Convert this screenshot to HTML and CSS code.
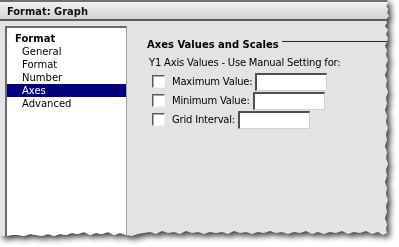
FILE: index.html
```html
<!DOCTYPE html>
<html>
<head>
<meta charset="utf-8">
<link rel="stylesheet" href="styles.css">
</head>
<body>
<div class="shot">
  <div class="window">
    <div class="titlebar">Format: Graph</div>
    <div class="content">
      <div class="list">
        <div class="list-head">Format</div>
        <div class="list-item">General</div>
        <div class="list-item">Format</div>
        <div class="list-item">Number</div>
        <div class="list-item selected">Axes</div>
        <div class="list-item">Advanced</div>
      </div>
      <div class="panel">
        <div class="group-head">
          <span class="group-title">Axes Values and Scales</span>
          <span class="group-line"></span>
        </div>
        <div class="subtitle">Y1 Axis Values - Use Manual Setting for:</div>
        <div class="row"><span class="check"></span><span class="label">Maximum Value:</span><span class="field"></span></div>
        <div class="row"><span class="check"></span><span class="label">Minimum Value:</span><span class="field"></span></div>
        <div class="row"><span class="check"></span><span class="label">Grid Interval:</span><span class="field"></span></div>
      </div>
    </div>
  </div>
</div>
</body>
</html>
```
FILE: styles.css
```css
html, body {
  margin: 0;
  padding: 0;
  background: #ffffff;
}
body {
  width: 399px;
  height: 247px;
  overflow: hidden;
  font-family: "DejaVu Sans", Verdana, sans-serif;
  font-size: 10px;
  letter-spacing: -0.2px;
  color: #000;
}
.shot {
  width: 392px;
  height: 240px;
  filter: drop-shadow(3px 3px 3px rgba(0, 0, 0, 0.8));
}
.window {
  width: 392px;
  height: 240px;
  background: #e3e3e3;
  display: flex;
  flex-direction: column;
  clip-path: polygon(0px 0px, 387px 0px, 388px 3px, 386px 6px, 388px 9px, 387px 13px, 389px 16px, 386px 19px, 387px 23px, 385px 26px, 388px 30px, 386px 34px, 388px 38px, 387px 42px, 385px 46px, 387px 50px, 386px 55px, 388px 60px, 386px 65px, 387px 70px, 385px 75px, 387px 80px, 386px 86px, 388px 92px, 386px 98px, 387px 104px, 385px 110px, 387px 116px, 386px 122px, 388px 128px, 386px 134px, 387px 140px, 385px 146px, 387px 152px, 386px 158px, 388px 164px, 386px 170px, 387px 176px, 385px 182px, 387px 188px, 386px 194px, 388px 200px, 386px 206px, 387px 212px, 385px 218px, 387px 224px, 386px 229px, 387px 233px, 383px 235px, 378px 232px, 372px 234px, 366px 231px, 360px 233px, 354px 232px, 348px 234px, 342px 231px, 336px 233px, 330px 232px, 324px 234px, 318px 232px, 312px 234px, 306px 231px, 300px 233px, 294px 232px, 288px 234px, 282px 232px, 276px 233px, 270px 231px, 264px 233px, 258px 232px, 252px 234px, 246px 232px, 240px 233px, 234px 231px, 228px 234px, 222px 232px, 216px 233px, 210px 232px, 204px 234px, 198px 232px, 192px 233px, 186px 231px, 180px 234px, 174px 232px, 168px 233px, 162px 231px, 156px 234px, 150px 232px, 144px 233px, 138px 234px, 132px 236px, 126px 235px, 120px 233px, 114px 235px, 108px 232px, 102px 234px, 96px 233px, 90px 235px, 84px 232px, 78px 234px, 72px 233px, 66px 235px, 60px 234px, 54px 236px, 48px 234px, 42px 236px, 36px 235px, 30px 234px, 24px 236px, 18px 235px, 12px 235px, 6px 236px, 0px 236px);
}
.titlebar {
  height: 17px;
  border-top: 2px solid #6f6f6f;
  border-bottom: 2px solid #5c5c5c;
  background: linear-gradient(#f2f2f2, #d2d3d5);
  font-family: "DejaVu Sans Condensed", "Liberation Sans", sans-serif;
  font-size: 11px;
  font-weight: bold;
  letter-spacing: 0;
  line-height: 19px;
  padding-left: 7px;
  color: #111;
}
.content {
  flex: 1;
  display: flex;
  padding-top: 5px;
}
.list {
  width: 119px;
  margin-left: 5px;
  background: #fff;
  border-top: 2px solid #6a6a6a;
  border-left: 2px solid #6a6a6a;
  border-right: 1px solid #a0a0a0;
  padding-top: 4px;
}
.list-head {
  height: 13px;
  line-height: 13px;
  font-weight: bold;
  letter-spacing: 0;
  padding-left: 8px;
}
.list-item {
  height: 13px;
  line-height: 13px;
  padding-left: 15px;
  letter-spacing: 0;
}
.selected {
  background: #000080;
  color: #fff;
}
.panel {
  flex: 1;
  padding-left: 20px;
  padding-top: 12px;
}
.group-head {
  display: flex;
  height: 13px;
  line-height: 13px;
}
.group-title {
  font-weight: bold;
  letter-spacing: 0;
}
.group-line {
  flex: 1;
  height: 1px;
  background: #2a2a2a;
  margin-top: 3px;
  margin-left: 3px;
}
.subtitle {
  margin-top: 6px;
  padding-left: 2px;
  height: 12px;
  line-height: 12px;
  margin-bottom: 3px;
}
.row {
  display: flex;
  align-items: center;
  height: 19px;
  padding-left: 5px;
}
.check {
  width: 11px;
  height: 11px;
  background: #fff;
  border-top: 1px solid #5a5a5a;
  border-left: 1px solid #5a5a5a;
  border-right: 1px solid #f4f4f4;
  border-bottom: 1px solid #f4f4f4;
  box-shadow: inset 1px 1px 0 #a8a8a8;
  margin-right: 7px;
}
.label {
  margin-right: 3px;
}
.field {
  width: 69px;
  height: 15px;
  background: #fff;
  border-top: 2px solid #505050;
  border-left: 2px solid #505050;
  border-right: 1px solid #d0d0d0;
  border-bottom: 1px solid #d0d0d0;
}
```
